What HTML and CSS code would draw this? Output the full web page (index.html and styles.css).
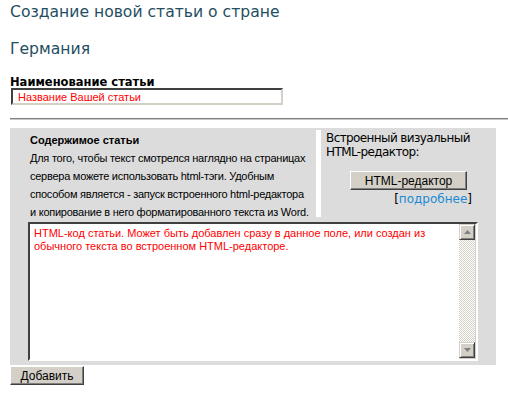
FILE: index.html
```html
<!DOCTYPE html>
<html lang="ru">
<head>
    <meta charset="UTF-8">
    <title>Создание новой статьи о стране</title>
    <link rel="stylesheet" href="styles.css">
</head>
<body>
    <div class="page">
        <h1 class="titulo">Создание новой статьи о стране</h1>
        <h2 class="pais">Германия</h2>

        <div class="campo-nome">
            <label class="rotulo" for="nome">Наименование статьи</label>
            <input class="entrada" id="nome" type="text" value="Название Вашей статьи">
        </div>
    </div>

    <div class="linha"></div>

    <div class="page">
        <div class="painel">
            <div class="topo">
                <div class="info">
                    <div class="info-titulo">Содержимое статьи</div>
                    Для того, чтобы текст смотрелся наглядно на страницах<br>
                    сервера можете использовать html-тэги. Удобным<br>
                    способом является - запуск встроенного html-редактора<br>
                    и копирование в него форматированного текста из Word.
                </div>
                <div class="separador"></div>
                <div class="editor">
                    <div class="editor-texto">Встроенный визуальный<br>HTML-редактор:</div>
                    <button class="botao botao-editor">HTML-редактор</button>
                    <div class="mais">[<a href="#">подробнее</a>]</div>
                </div>
            </div>

            <div class="caixa">
                <textarea class="texto">HTML-код статьи. Может быть добавлен сразу в данное поле, или создан из обычного текста во встроенном HTML-редакторе.</textarea>
                <div class="rolagem">
                    <div class="seta">
                        <svg width="7" height="4" viewBox="0 0 7 4"><path d="M3.5 0 L7 4 L0 4 Z" fill="#808080"/></svg>
                    </div>
                    <div class="trilho"></div>
                    <div class="seta">
                        <svg width="7" height="4" viewBox="0 0 7 4"><path d="M0 0 L7 0 L3.5 4 Z" fill="#808080"/></svg>
                    </div>
                </div>
            </div>
        </div>

        <button class="botao botao-enviar">Добавить</button>
    </div>
</body>
</html>
```

FILE: styles.css
```css
body {
  margin: 0;
  background: white;
  font-family: "DejaVu Sans", Verdana, sans-serif;
}

.page {
  padding-left: 10px;
}

.titulo {
  margin: 0;
  padding-top: 3px;
  font-size: 15.6px;
  line-height: 18px;
  font-weight: normal;
  color: #1f4e62;
}

.pais {
  margin: 0;
  padding-top: 19px;
  font-size: 15.6px;
  line-height: 18px;
  font-weight: normal;
  color: #1f4e62;
}

.campo-nome {
  padding-top: 18px;
}

.rotulo {
  display: block;
  font-size: 11.5px;
  font-weight: bold;
  line-height: 12px;
  color: black;
}

.entrada {
  display: block;
  box-sizing: border-box;
  width: 272px;
  height: 17px;
  margin: 0 0 0 1px;
  padding: 0 0 0 5px;
  border: 2px solid;
  border-color: #404040 #d4d0c8 #d4d0c8 #404040;
  font-family: "Liberation Sans", Tahoma, sans-serif;
  font-size: 11px;
  color: red;
  background: white;
  outline: none;
}

.linha {
  margin: 13px 0 0 10px;
  border-top: 1px solid #808080;
  border-bottom: 1px solid #c8c8c8;
}

.painel {
  margin-top: 8px;
  width: 486px;
  background: #dcdcdc;
  padding: 2px 0 4px 0;
}

.topo {
  display: flex;
  height: 87px;
}

.info {
  width: 286px;
  padding: 1px 0 0 20px;
  font-family: "Liberation Sans", Tahoma, sans-serif;
  font-size: 11px;
  letter-spacing: -0.25px;
  line-height: 18px;
  white-space: nowrap;
  color: black;
}

.info-titulo {
  font-weight: bold;
  letter-spacing: 0;
}

.separador {
  width: 5px;
  background: white;
}

.editor {
  padding: 1px 0 0 5px;
  font-size: 12px;
  line-height: 14px;
  color: black;
  width: 146px;
}

.editor-texto {
  white-space: nowrap;
  letter-spacing: -0.6px;
}

.botao {
  background: #d4d0c8;
  border: 1px solid;
  border-color: #ffffff #404040 #404040 #ffffff;
  box-shadow: inset -1px -1px 0 #808080;
  color: black;
  padding: 0;
  cursor: pointer;
}

.botao-editor {
  display: block;
  margin: 12px 0 0 24px;
  width: 117px;
  height: 19px;
  font-family: "Liberation Sans", Tahoma, sans-serif;
  font-size: 12px;
}

.mais {
  text-align: right;
  margin-top: 2px;
  font-size: 12px;
  line-height: 14px;
}

.mais a {
  color: #1a8ad4;
  text-decoration: none;
}

.caixa {
  display: flex;
  margin: 5px 0 0 18px;
  width: 450px;
  height: 139px;
  box-sizing: border-box;
  border: 2px solid;
  border-color: #404040 #ffffff #ffffff #404040;
  background: white;
}

.texto {
  flex: 1;
  border: none;
  resize: none;
  outline: none;
  padding: 3px 4px;
  margin: 0;
  font-family: "Liberation Sans", Tahoma, sans-serif;
  font-size: 11px;
  line-height: 13px;
  color: red;
  background: white;
}

.rolagem {
  width: 16px;
  display: flex;
  flex-direction: column;
  border-right: 1px solid #d4d0c8;
  border-bottom: 1px solid #d4d0c8;
}

.seta {
  height: 16px;
  box-sizing: border-box;
  background: #d4d0c8;
  border: 1px solid;
  border-color: #d4d0c8 #404040 #404040 #d4d0c8;
  box-shadow: inset 1px 1px 0 #ffffff, inset -1px -1px 0 #808080;
  display: flex;
  align-items: center;
  justify-content: center;
}

.trilho {
  flex: 1;
  background: repeating-conic-gradient(#d4d0c8 0 25%, #ffffff 0 50%) 0 0 / 2px 2px;
}

.botao-enviar {
  display: block;
  margin-top: 1px;
  width: 74px;
  height: 19px;
  font-family: "Liberation Sans", Tahoma, sans-serif;
  font-size: 12px;
}
```
